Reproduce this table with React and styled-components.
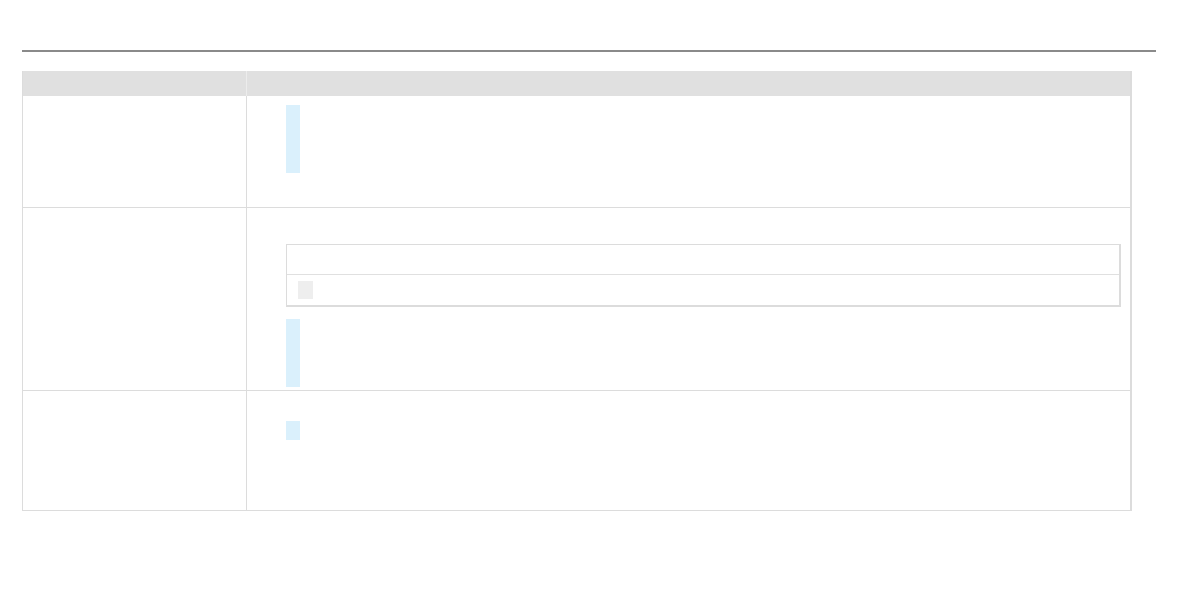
import React from "react";
import styled, { createGlobalStyle } from "styled-components";

const Global = createGlobalStyle`
  html, body { margin: 0; padding: 0; background: #fff; }
  body { font-family: "Liberation Sans", Arial, sans-serif; font-size: 13px; color: #222; }
`;

const Page = styled.div`
  padding: 50px 35px 0 22px;
  display: flex;
  flex-direction: column;
`;

const Rule = styled.div`
  height: 2px;
  background: #8a8a8a;
`;

const Table = styled.div`
  margin-top: 19px;
  width: 1110px;
  display: grid;
  grid-template-columns: 223px 1fr;
  border-left: 1px solid #dcdcdc;
  border-right: 2px solid #dcdcdc;
  box-sizing: border-box;
`;

const HeadCell = styled.div`
  height: 25px;
  background: #e0e0e0;
  border-left: ${(p) => (p.$first ? "none" : "1px solid #ececec")};
`;

const NameCell = styled.div`
  height: ${(p) => p.$h}px;
  border-bottom: 1px solid #dcdcdc;
  box-sizing: border-box;
`;

const BodyCell = styled.div`
  height: ${(p) => p.$h}px;
  border-left: 1px solid #dcdcdc;
  border-bottom: 1px solid #dcdcdc;
  box-sizing: border-box;
  padding: ${(p) => p.$pt}px 9px 0 39px;
  display: flex;
  flex-direction: column;
  align-items: flex-start;
`;

const Quote = styled.div`
  width: 14px;
  height: ${(p) => p.$h}px;
  background: #daf0fc;
  margin-top: ${(p) => p.$mt || 0}px;
`;

const Inner = styled.div`
  align-self: stretch;
  border: 1px solid #dcdcdc;
  border-width: 1px 2px 2px 1px;
  display: flex;
  flex-direction: column;
`;

const InnerRow = styled.div`
  height: ${(p) => p.$h}px;
  border-top: ${(p) => (p.$divider ? "1px solid #e0e0e0" : "none")};
  display: flex;
  align-items: center;
  padding-left: 11px;
`;

const Chip = styled.div`
  width: 15px;
  height: 18px;
  background: #eeeeee;
`;

export default function App() {
  return (
    <>
      <Global />
      <Page>
        <Rule />
        <Table>
          <HeadCell $first />
          <HeadCell />

          <NameCell $h={112} />
          <BodyCell $h={112} $pt={9}>
            <Quote $h={68} />
          </BodyCell>

          <NameCell $h={183} />
          <BodyCell $h={183} $pt={36}>
            <Inner>
              <InnerRow $h={29} />
              <InnerRow $h={30} $divider>
                <Chip />
              </InnerRow>
            </Inner>
            <Quote $h={68} $mt={12} />
          </BodyCell>

          <NameCell $h={120} />
          <BodyCell $h={120} $pt={30}>
            <Quote $h={19} />
          </BodyCell>
        </Table>
      </Page>
    </>
  );
}
